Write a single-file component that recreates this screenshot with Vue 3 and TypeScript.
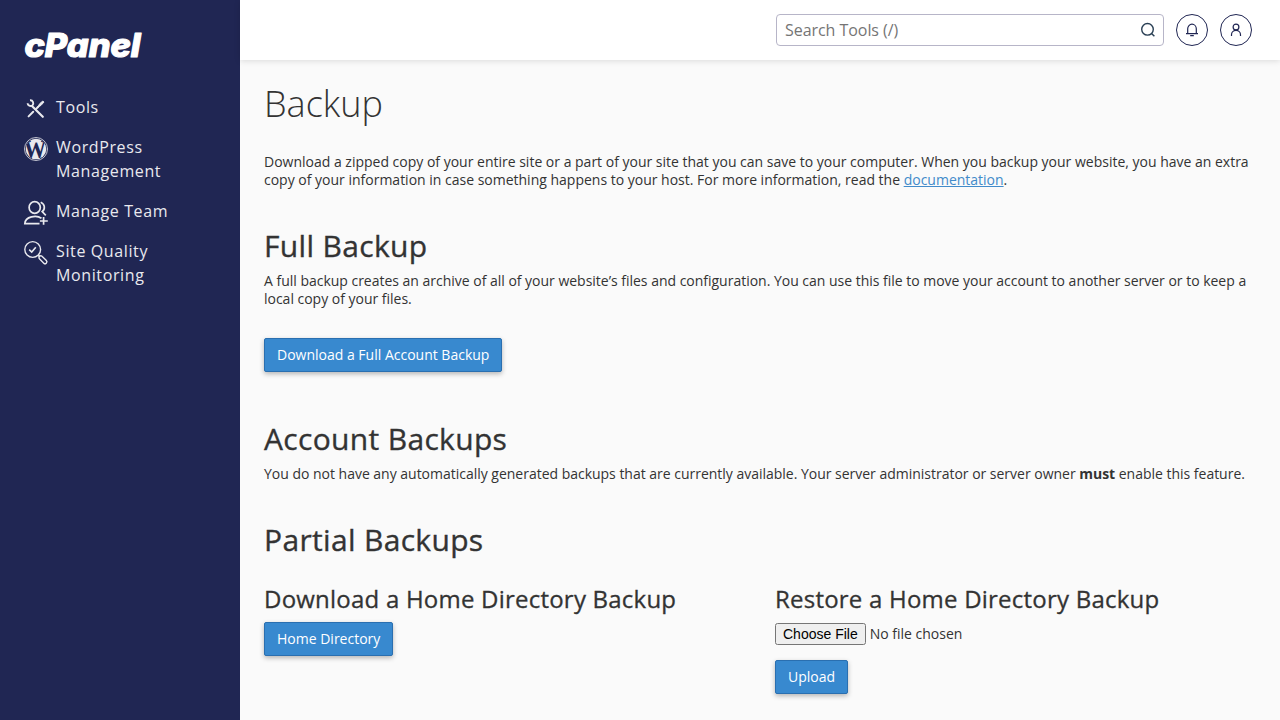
<script setup lang="ts">
import { ref } from 'vue'

interface NavItem {
  id: string
  label: string
}

const navItems: NavItem[] = [
  { id: 'tools', label: 'Tools' },
  { id: 'wordpress', label: 'WordPress Management' },
  { id: 'team', label: 'Manage Team' },
  { id: 'quality', label: 'Site Quality Monitoring' },
]
const query = ref('')
</script>

<template>
  <div class="shell">
    <aside class="sidebar">
      <a class="brand" aria-label="cPanel">
        <svg width="124" height="44" viewBox="0 -6 124 44">
          <text class="brand-text" x="0.5" y="28" textLength="116" lengthAdjust="spacingAndGlyphs">cPanel</text>
        </svg>
      </a>
      <nav>
        <a v-for="item in navItems" :key="item.id" class="nav-item">
          <svg v-if="item.id === 'tools'" class="nav-icon" viewBox="0 0 24 24">
            <path d="M8.2 9.2 18.8 19.8" stroke="#e9e9ee" stroke-width="2.2" stroke-linecap="round" />
            <path d="M3.6 6.2A3 3 0 0 0 8.3 8.5 3 3 0 0 0 6 3.3" fill="none" stroke="#e9e9ee" stroke-width="1.9" />
            <path d="M13.6 10.4 15.6 6.8 18.8 4 19.9 5.1 17.1 8.3Z" fill="#e9e9ee" stroke="#e9e9ee" stroke-linejoin="round" />
            <path d="M14.2 9.8 11.6 12.4M9.2 14.8 4.6 19.4" stroke="#e9e9ee" stroke-width="2" stroke-linecap="round" />
          </svg>
          <svg v-else-if="item.id === 'wordpress'" class="nav-icon" viewBox="0 0 24 24">
            <defs><clipPath id="disc"><circle cx="12" cy="12" r="10.3" /></clipPath></defs>
            <circle cx="12" cy="12" r="11.5" fill="none" stroke="#e9e9ee" stroke-width=".8" />
            <circle cx="12" cy="12" r="10.3" fill="#e9e9ee" />
            <g clip-path="url(#disc)"><text class="w-mark" x="-0.2" y="21" textLength="22.5" lengthAdjust="spacingAndGlyphs">W</text></g>
          </svg>
          <svg v-else-if="item.id === 'team'" class="nav-icon line" viewBox="0 0 24 24">
            <ellipse cx="10.7" cy="6.5" rx="5.6" ry="5.8" />
            <path d="M16.7 1.2C21.2 3.2 21.3 8.2 18.2 10.7L21.8 14.4M17.5 17.2C12.5 13.9 1.2 15.2.8 22.7H15.5M19.6 16V23.8M15.9 20H23.8" />
          </svg>
          <svg v-else class="nav-icon line" viewBox="0 0 24 24">
            <circle cx="8.7" cy="8.5" r="7.9" stroke-width="1.4" />
            <path d="M5.2 8.7 7.7 11 11.8 6.3" stroke-width="1.6" />
            <path d="M14.3 14.1 16 15.8" stroke-width="1.8" />
            <rect x="-1.8" y="0" width="3.6" height="9.6" rx="1.7" transform="translate(15.5 15.3) rotate(-45)" stroke-width="1.4" />
          </svg>
          <span>{{ item.label }}</span>
        </a>
      </nav>
    </aside>

    <div class="page">
      <header class="topbar">
        <div class="search">
          <input v-model="query" type="text" placeholder="Search Tools (/)" />
          <svg width="16" height="16" viewBox="0 0 16 16">
            <circle cx="7.5" cy="7.3" r="5.8" />
            <path d="M11.5 11.4 14.4 14.3" />
          </svg>
        </div>
        <button class="round" aria-label="Notifications">
          <svg width="16" height="16" viewBox="0 0 16 16">
            <path d="M2 11.6H14M3.7 11.4V6.8A4.3 4.6 0 0 1 12.3 6.8V11.4M6.2 13.6H9.8" />
          </svg>
        </button>
        <button class="round" aria-label="Account">
          <svg width="16" height="16" viewBox="0 0 16 16">
            <circle cx="8" cy="5" r="2.9" />
            <path d="M3.5 14V12.7A4.5 4.3 0 0 1 12.5 12.7V14" />
          </svg>
        </button>
      </header>

      <main>
        <h1>Backup</h1>
        <p class="intro">
          Download a zipped copy of your entire site or a part of your site that you can save to your computer. When you
          backup your website, you have an extra copy of your information in case something happens to your host. For
          more information, read the <a class="link">documentation</a>.
        </p>

        <section class="full">
          <h2>Full Backup</h2>
          <p>
            A full backup creates an archive of all of your website’s files and configuration. You can use this file to
            move your account to another server or to keep a local copy of your files.
          </p>
          <button class="btn">Download a Full Account Backup</button>
        </section>

        <section class="account">
          <h2>Account Backups</h2>
          <p>
            You do not have any automatically generated backups that are currently available. Your server administrator
            or server owner <strong>must</strong> enable this feature.
          </p>
        </section>

        <section>
          <h2>Partial Backups</h2>
          <div class="columns">
            <div>
              <h3>Download a Home Directory Backup</h3>
              <button class="btn">Home Directory</button>
            </div>
            <div>
              <h3>Restore a Home Directory Backup</h3>
              <input class="file" type="file" />
              <button class="btn">Upload</button>
            </div>
          </div>
        </section>
      </main>
    </div>
  </div>
</template>

<style>
body {
  margin: 0;
  overflow: hidden;
}
</style>

<style scoped>
.shell {
  display: flex;
  height: 720px;
  overflow: hidden;
  background: #fafafa;
  color: #333;
  font: 14px/18px 'Open Sans', 'Noto Sans', sans-serif;
}
* {
  box-sizing: border-box;
}
.sidebar {
  width: 240px;
  flex: none;
  background: #202653;
}
.brand {
  display: block;
  height: 44px;
  margin: 23px 0 0 24px;
}
.brand svg {
  display: block;
  overflow: visible;
}
.brand-text {
  font: italic 800 32px/40px Inter, sans-serif;
  fill: #fff;
  stroke: #fff;
  stroke-width: 1.2px;
  stroke-linejoin: round;
}
nav {
  margin-top: 28px;
}
.nav-item {
  display: flex;
  align-items: flex-start;
  gap: 8px;
  width: 200px;
  margin-bottom: 16px;
  padding-left: 24px;
  color: #e9e9ee;
  font-size: 16px;
  line-height: 24px;
  letter-spacing: 0.62px;
}
.nav-icon {
  width: 24px;
  height: 24px;
  flex: none;
  margin: 2px 0 -2px;
  overflow: visible;
}
.line {
  fill: none;
  stroke: #e9e9ee;
  stroke-width: 1.7;
}
.w-mark {
  font: bold 26px 'Liberation Serif', serif;
  letter-spacing: 0;
  fill: #202653;
}
.page {
  flex: 1;
  min-width: 0;
}
.topbar {
  display: flex;
  justify-content: flex-end;
  align-items: center;
  gap: 12px;
  height: 60px;
  padding-right: 28px;
  background: #fff;
  box-shadow: 0 1px 6px rgba(0, 0, 0, 0.13);
}
.search {
  display: flex;
  align-items: center;
  width: 388px;
  height: 32px;
  padding: 0 7px 0 8px;
  border: 1px solid #b7b5c8;
  border-radius: 4px;
}
.search input {
  flex: 1;
  min-width: 0;
  padding: 0;
  border: 0;
  outline: 0;
  background: none;
  font: 16px/24px 'Open Sans', sans-serif;
  letter-spacing: -0.05px;
}
.search input::placeholder {
  color: #757575;
}
.search svg,
.round svg {
  fill: none;
  stroke: #293f54;
  stroke-width: 1.4;
}
.round {
  display: flex;
  align-items: center;
  justify-content: center;
  width: 32px;
  height: 32px;
  padding: 0;
  border: 1px solid #202653;
  border-radius: 50%;
  background: #fff;
}
.round svg {
  stroke: #202653;
  stroke-width: 1.2;
}
main {
  padding: 24px 24px 0;
}
h1,
h2,
h3,
p {
  margin: 0;
}
h1 {
  font-size: 36px;
  line-height: 40px;
  font-weight: 300;
}
p {
  letter-spacing: -0.015px;
}
.intro {
  margin-top: 29px;
  letter-spacing: -0.004px;
}
.link {
  color: #428bca;
  text-decoration: underline;
}
h2 {
  font-size: 30px;
  line-height: 33px;
  font-weight: 400;
  letter-spacing: 0.33px;
  -webkit-text-stroke: 0.35px #333;
}
h2 + p {
  margin-top: 10px;
}
.full {
  margin-top: 40px;
}
.full .btn {
  margin-top: 30px;
}
.account {
  margin: 50px 0 40px;
}
.btn {
  display: block;
  height: 34px;
  padding: 0 12px;
  border: 1px solid #2a6fb0;
  border-radius: 2px;
  background: #3889cf;
  color: #fff;
  font: 14px/18px 'Open Sans', sans-serif;
  box-shadow: 0 2px 5px rgba(0, 0, 0, 0.28);
}
.columns {
  display: grid;
  grid-template-columns: 481px 481px;
  gap: 30px;
  margin-top: 30px;
}
h3 {
  padding-bottom: 10px;
  font-size: 24px;
  line-height: 26px;
  font-weight: 400;
  letter-spacing: 0.22px;
  -webkit-text-stroke: 0.3px #333;
}
.file {
  display: block;
  margin: 1px 0 15px;
  color: #333;
  font: 14px/18px 'Open Sans', sans-serif;
}
.file::file-selector-button {
  font-family: 'Liberation Sans', sans-serif;
}
</style>
